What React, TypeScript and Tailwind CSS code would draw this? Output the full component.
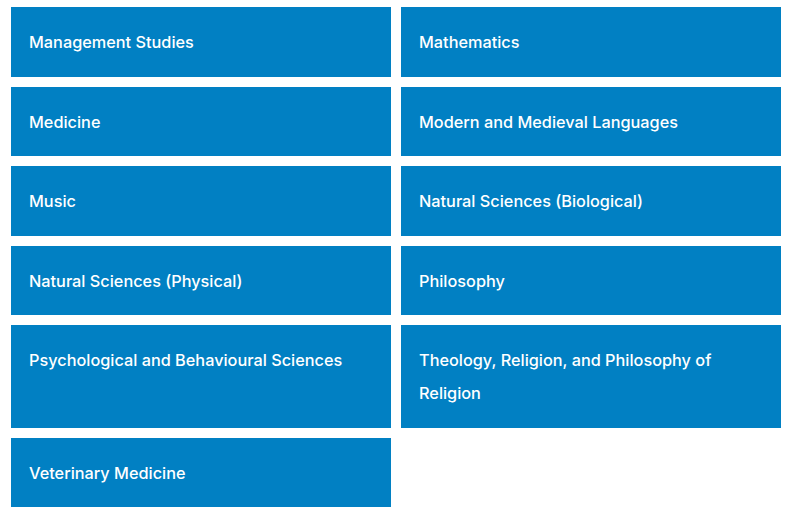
import React from "react";

const subjects = [
  "Management Studies",
  "Mathematics",
  "Medicine",
  "Modern and Medieval Languages",
  "Music",
  "Natural Sciences (Biological)",
  "Natural Sciences (Physical)",
  "Philosophy",
  "Psychological and Behavioural Sciences",
  "Theology, Religion, and Philosophy of Religion",
  "Veterinary Medicine",
];

export default function App() {
  return (
    <div className="bg-white min-h-screen px-[11px] pt-[7px] font-['Inter',sans-serif]">
      <div className="grid grid-cols-2 gap-[10px] w-[770px]">
        {subjects.map((s) => (
          <a
            key={s}
            href="#"
            className="block bg-[#0180c3] text-white pl-[18px] pr-[22px] pt-[19px] pb-[17.5px] text-[16.3px] leading-[33px] font-medium"
          >
            {s}
          </a>
        ))}
      </div>
    </div>
  );
}
